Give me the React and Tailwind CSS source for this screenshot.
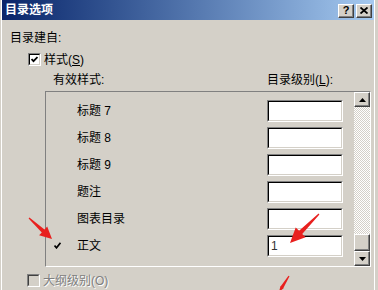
import React from "react";

function arrowPoints(x1, y1, x2, y2, H, W, t0, t1) {
  const dx = x2 - x1, dy = y2 - y1;
  const L = Math.hypot(dx, dy);
  const ux = dx / L, uy = dy / L;
  const px = -uy, py = ux;
  const bx = x2 - ux * H, by = y2 - uy * H;
  const pts = [
    [x1 + px * t0, y1 + py * t0],
    [bx + px * t1, by + py * t1],
    [bx + px * W, by + py * W],
    [x2, y2],
    [bx - px * W, by - py * W],
    [bx - px * t1, by - py * t1],
    [x1 - px * t0, y1 - py * t0],
  ];
  return pts.map((p) => p[0].toFixed(1) + "," + p[1].toFixed(1)).join(" ");
}

function Field({ value }) {
  return (
    <div className="h-[22px] w-[76px] border-t border-l border-t-[#808080] border-l-[#808080] border-b border-r border-b-white border-r-white">
      <div className="flex h-full w-full items-center border-t border-l border-t-black border-l-black border-b border-r border-b-[#d4d0c8] border-r-[#d4d0c8] bg-white pl-[2px] text-[12px] text-[#333]">
        {value}
      </div>
    </div>
  );
}

function ScrollBtn({ up, className = "" }) {
  return (
    <div className={"flex w-[16px] items-center justify-center border-t border-l border-t-white border-l-white border-b border-r border-b-[#404040] border-r-[#404040] bg-[#d4d0c8] shadow-[inset_-1px_-1px_0_#808080] " + className}>
      <svg width="7" height="4" viewBox="0 0 7 4">
        {up ? <polygon points="3.5,0 7,4 0,4" fill="#000" /> : <polygon points="0,0 7,0 3.5,4" fill="#000" />}
      </svg>
    </div>
  );
}

export default function App() {
  const rows = [
    { label: "标题 7", value: "" },
    { label: "标题 8", value: "" },
    { label: "标题 9", value: "" },
    { label: "题注", value: "" },
    { label: "图表目录", value: "" },
    { label: "正文", value: "1", checked: true },
  ];
  return (
    <div className="relative h-[290px] w-[378px] overflow-hidden bg-[#d4d0c8] font-['Liberation_Sans','Noto_Sans_CJK_SC',sans-serif] text-[12px] leading-[16px] text-black">
      <div className="ml-[1px] flex h-full w-[374px] flex-col border-l border-r border-l-white border-r-white">
        {/* Title bar */}
        <div className="flex h-[20px] items-center justify-between bg-gradient-to-r from-[#0a246a] to-[#a6caf0] pl-[3px] pr-[2px]">
          <span className="text-[12px] font-bold text-white">目录选项</span>
          <div className="flex gap-[2px] pt-[1px]">
            <div className="flex h-[14px] w-[16px] items-center justify-center border-t border-l border-t-white border-l-white border-b border-r border-b-[#404040] border-r-[#404040] bg-[#d4d0c8] text-[11px] font-bold leading-none shadow-[inset_-1px_-1px_0_#808080]">?</div>
            <div className="flex h-[14px] w-[16px] items-center justify-center border-t border-l border-t-white border-l-white border-b border-r border-b-[#404040] border-r-[#404040] bg-[#d4d0c8] shadow-[inset_-1px_-1px_0_#808080]">
              <svg width="8" height="7" viewBox="0 0 8 7">
                <path d="M0.5 0.5 L7.5 6.5 M7.5 0.5 L0.5 6.5" stroke="#000" strokeWidth="1.8" />
              </svg>
            </div>
          </div>
        </div>

        {/* Body */}
        <div className="flex flex-col pl-[8px]">
          <div className="mt-[10px] h-[16px]">目录建自:</div>

          <div className="ml-[18px] mt-[7px] flex h-[13px] items-center gap-[2px]">
            <div className="h-[13px] w-[13px] border-t border-l border-t-[#808080] border-l-[#808080] border-b border-r border-b-white border-r-white">
              <div className="flex h-full w-full items-center justify-center border-t border-l border-t-black border-l-black border-b border-r border-b-[#d4d0c8] border-r-[#d4d0c8] bg-white">
                <svg width="7" height="7" viewBox="0 0 7 7">
                  <path d="M0.5 3 L2.5 5.2 L6.5 1" stroke="#000" strokeWidth="1.8" fill="none" />
                </svg>
              </div>
            </div>
            <span className="ml-[1px]">样式(<span className="underline">S</span>)</span>
          </div>

          <div className="mt-[6px] flex h-[16px] items-center">
            <span className="ml-[43px] w-[214px]">有效样式:</span>
            <span>目录级别(<span className="underline">L</span>):</span>
          </div>

          {/* List box */}
          <div className="ml-[35px] mt-[3px] flex h-[176px] w-[326px] border-t border-l border-t-[#808080] border-l-[#808080] border-b border-r border-b-white border-r-white">
            <div className="flex flex-1 flex-col pl-[8px] pr-[11px] pt-[5px]">
              {rows.map((r) => (
                <div key={r.label} className="flex h-[27px] items-center">
                  <div className="flex w-[23px] items-center">
                    {r.checked && (
                      <svg width="7" height="7" viewBox="0 0 7 7">
                        <path d="M0.5 3.5 L2.5 5.8 L6.5 0.8" stroke="#000" strokeWidth="1.7" fill="none" />
                      </svg>
                    )}
                  </div>
                  <span className="flex-1">{r.label}</span>
                  <Field value={r.value} />
                </div>
              ))}
            </div>
            <div className="flex w-[16px] flex-col">
              <ScrollBtn up className="h-[15px]" />
              <div className="flex-1 bg-[image:repeating-conic-gradient(#d4d0c8_0%_25%,#ffffff_0%_50%)] bg-[length:2px_2px]" />
              <div className="h-[17px] w-[16px] border-t border-l border-t-white border-l-white border-b border-r border-b-[#404040] border-r-[#404040] bg-[#d4d0c8] shadow-[inset_-1px_-1px_0_#808080]" />
              <ScrollBtn className="h-[15px]" />
            </div>
          </div>

          <div className="ml-[17px] mt-[7px] flex h-[13px] items-center gap-[3px]">
            <div className="h-[13px] w-[13px] border-t border-l border-t-[#808080] border-l-[#808080] border-b border-r border-b-white border-r-white">
              <div className="h-full w-full border-t border-l border-t-[#404040] border-l-[#404040] border-b border-r border-b-[#d4d0c8] border-r-[#d4d0c8] bg-[#d4d0c8]" />
            </div>
            <span className="text-[#808080] [text-shadow:1px_1px_0_#ffffff]">大纲级别(O)</span>
          </div>
        </div>
      </div>

      {/* Red annotation arrows */}
      <svg className="pointer-events-none absolute inset-0" width="378" height="290" viewBox="0 0 378 290">
        <polygon points={arrowPoints(29, 218, 52, 239, 12, 6, 0.6, 2)} fill="#e8201e" />
        <polygon points={arrowPoints(319, 214, 290, 243, 15, 7, 0.6, 2.2)} fill="#e8201e" />
        <polygon points={arrowPoints(289, 276, 279, 292, 6, 2, 0.6, 1.5)} fill="#e8201e" />
      </svg>
    </div>
  );
}
